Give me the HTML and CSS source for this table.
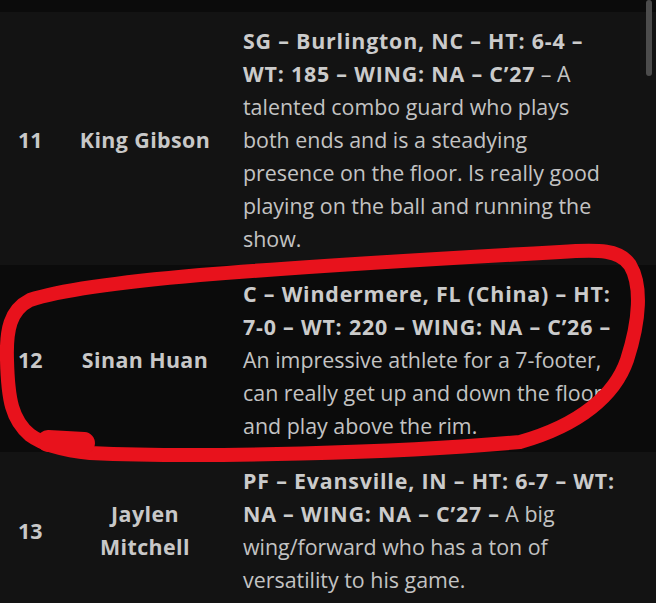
FILE: index.html
```html
<!DOCTYPE html>
<html lang="en">
<head>
<meta charset="utf-8">
<title>Prospects</title>
<link rel="stylesheet" href="styles.css">
</head>
<body>
<div class="page">
  <div class="top-strip"></div>
  <div class="rows">
    <div class="row row-light">
      <div class="num">11</div>
      <div class="name">King Gibson</div>
      <div class="desc"><strong>SG – Burlington, NC – HT: 6-4 – WT: 185 – WING: NA – C’27</strong> – A talented combo guard who plays both ends and is a steadying presence on the floor. Is really good playing on the ball and running the show.</div>
    </div>
    <div class="row row-dark">
      <div class="num">12</div>
      <div class="name">Sinan Huan</div>
      <div class="desc"><strong>C – Windermere, FL (China) – HT: 7-0 – WT: 220 – WING: NA – C’26 –</strong> An impressive athlete for a 7-footer, can really get up and down the floor and play above the rim.</div>
    </div>
    <div class="row row-light">
      <div class="num">13</div>
      <div class="name">Jaylen Mitchell</div>
      <div class="desc"><strong>PF – Evansville, IN – HT: 6-7 – WT: NA – WING: NA – C’27 –</strong> A big wing/forward who has a ton of versatility to his game.</div>
    </div>
  </div>
  <div class="scrollbar"></div>
  <svg class="circle" width="656" height="603" viewBox="0 0 656 603">
    <path class="ink" d="M 90 453 C 200 458, 400 453, 520 442 C 580 425, 615 395, 627 360 C 640 320, 642 285, 630 265 C 620 250, 600 249, 560 252 C 450 258, 300 267, 200 275 C 120 282, 60 290, 30 300 C 10 310, 6 330, 7 360 C 8 400, 12 420, 30 435 C 45 446, 70 451, 90 453 Z"/>
    <path class="blob" d="M 48 441 L 84 443"/>
  </svg>
</div>
</body>
</html>
```
FILE: styles.css
```css
html, body {
  margin: 0;
  padding: 0;
  background: #0b0b0b;
}
.page {
  position: relative;
  width: 656px;
  height: 603px;
  overflow: hidden;
  font-family: "Open Sans", "Liberation Sans", sans-serif;
  font-size: 21.4px;
  line-height: 33px;
  color: #c3c3c3;
}
.top-strip {
  height: 12px;
  background: #0b0b0b;
}
.row {
  display: grid;
  grid-template-columns: 72px 146px 1fr;
  align-items: center;
  padding: 12px 0 10px;
}
.row-light { background: #131313; }
.row-dark { background: #0b0b0b; }
.num {
  padding-left: 18px;
  font-weight: 700;
  color: #c8c8c8;
}
.name {
  text-align: center;
  font-weight: 700;
  letter-spacing: 0.4px;
  color: #c8c8c8;
  padding: 0 3px;
}
.desc {
  padding-left: 25px;
  padding-right: 36px;
}
.desc strong {
  font-weight: 700;
  letter-spacing: 0.8px;
  color: #cbcbcb;
}
.scrollbar {
  position: absolute;
  top: 0;
  left: 646px;
  width: 6px;
  height: 76px;
  border-radius: 3px;
  background: #4c4c4c;
}
.circle {
  position: absolute;
  top: 0;
  left: 0;
}
.ink {
  fill: none;
  stroke: #e8121c;
  stroke-width: 14;
  stroke-linecap: round;
  stroke-linejoin: round;
}
.blob {
  fill: none;
  stroke: #e8121c;
  stroke-width: 22;
  stroke-linecap: round;
}
```
